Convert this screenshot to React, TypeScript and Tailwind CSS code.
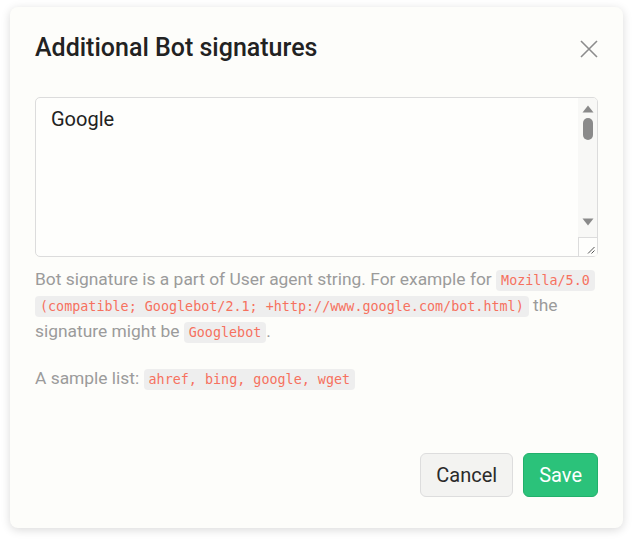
import React from "react";

const Code = ({ children }: { children: React.ReactNode }) => (
  <code
    className="rounded-[4px] bg-[#eeeeee] px-[5px] py-[3px] text-[13.4px] text-[#f6715e] [box-decoration-break:clone]"
    style={{ fontFamily: '"DejaVu Sans Mono", monospace' }}
  >
    {children}
  </code>
);

export default function App() {
  return (
    <div className="h-[543px] w-[633px] bg-white pt-[7px] pl-[10px]" style={{ fontFamily: "Roboto, sans-serif" }}>
      <div className="flex h-[521px] w-[613px] flex-col rounded-[8px] bg-[#fdfdfa] px-[25px] pb-[31px] pt-[26px] shadow-[0_2px_10px_rgba(0,0,0,0.15)]">
        <div className="flex items-center justify-between">
          <h2 className="text-[25px] font-medium leading-[30px] text-[#222222]">Additional Bot signatures</h2>
          <button className="mt-[2px] text-[#8c8c8c]">
            <svg width="18" height="18" viewBox="0 0 18 18" fill="none" stroke="currentColor" strokeWidth="1.6">
              <path d="M1 1L17 17M17 1L1 17" />
            </svg>
          </button>
        </div>
        <div className="relative mt-[34px] h-[160px] w-full">
          <textarea
            readOnly
            value="Google"
            className="block h-full w-full resize-none overflow-hidden rounded-[5px] border border-[#dcdcdc] bg-[#fefefc] px-[15px] pt-[6px] text-[20px] leading-[30px] text-[#222222] outline-none"
            style={{ fontFamily: "Roboto, sans-serif" }}
          />
          <div className="absolute right-[1px] top-[1px] bottom-[1px] flex w-[19px] flex-col items-center rounded-tr-[4px] bg-[#f8f8f6]">
            <svg className="mt-[7px]" width="12" height="8" viewBox="0 0 12 8">
              <path d="M0.5 7.5L6 0.5L11.5 7.5Z" fill="#8a8a8a" />
            </svg>
            <div className="mt-[5px] h-[22px] w-[10px] rounded-full bg-[#8a8a8a]" />
            <div className="flex-1" />
            <svg className="mb-[11px]" width="12" height="8" viewBox="0 0 12 8">
              <path d="M0.5 0.5L6 7.5L11.5 0.5Z" fill="#8a8a8a" />
            </svg>
            <div className="flex h-[19px] w-[19px] items-end justify-end rounded-br-[4px] border-l border-t border-[#dcdcdc] bg-[#fefefc] p-[2px]">
              <svg width="8" height="8" viewBox="0 0 8 8" stroke="#555" strokeWidth="1">
                <path d="M7.5 1L1 7.5M7.5 4.5L4.5 7.5" />
              </svg>
            </div>
          </div>
        </div>
        <p className="mt-[10px] text-[17.4px] leading-[25px] text-[#9b9b9b]">
          Bot signature is a part of User agent string. For example for{" "}
          <Code>Mozilla/5.0 (compatible; Googlebot/2.1; +http://www.google.com/bot.html)</Code> the
          signature might be <Code>Googlebot</Code>.
        </p>
        <p className="mt-[21px] text-[17.4px] leading-[25px] text-[#9b9b9b]">
          A sample list: <Code>ahref, bing, google, wget</Code>
        </p>
        <div className="mt-auto flex justify-end gap-[10px]">
          <button className="h-[44px] rounded-[6px] border border-[#dddddd] bg-[#f3f3f1] px-[15px] text-[20px] text-[#2a2a2a]">
            Cancel
          </button>
          <button className="h-[44px] rounded-[6px] border border-[#22b06b] bg-[#2bc27a] px-[15px] text-[20px] text-white">
            Save
          </button>
        </div>
      </div>
    </div>
  );
}
